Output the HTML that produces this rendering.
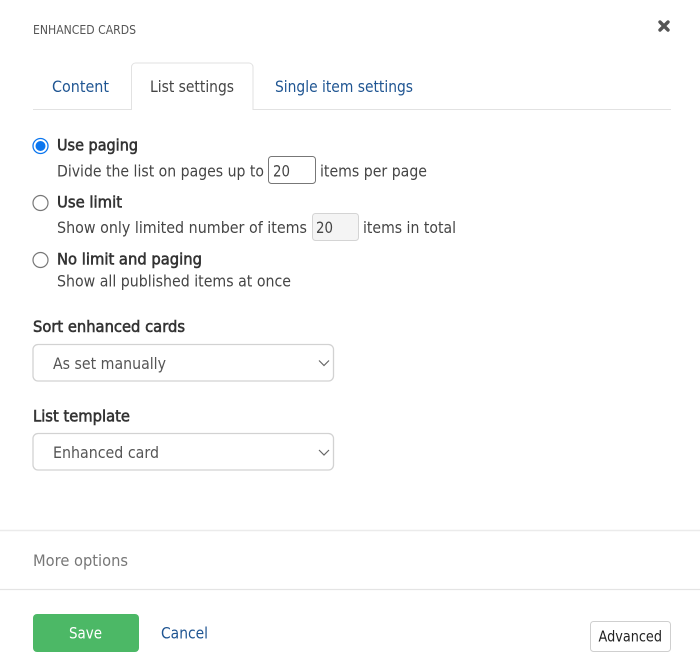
<!DOCTYPE html>
<html><head><meta charset="utf-8"><style>
html,body{margin:0;padding:0;background:#fff;width:700px;height:672px;overflow:hidden}
svg{display:block}
text{font-family:"DejaVu Sans","Liberation Sans",sans-serif;font-size:16px;fill:#454545}
.b{fill:#333;stroke:#333;stroke-width:.6px;font-size:16px}
.l{fill:#1f5592}
</style></head><body>
<svg width="700" height="672" viewBox="0 0 700 672" xmlns="http://www.w3.org/2000/svg">
<rect width="700" height="672" fill="#fff"/>
<text x="33" y="34" style="font-size:12.500px;fill:#555" textLength="103" lengthAdjust="spacingAndGlyphs">ENHANCED CARDS</text>
<path d="M660 22L668 30M668 22L660 30" stroke="#555" stroke-width="3.400" stroke-linecap="round"/>
<path d="M33 109.500H671" stroke="#e2e2e2" stroke-width="1"/>
<path d="M131.500 110V67a4 4 0 0 1 4-4H249a4 4 0 0 1 4 4V110" fill="#fff" stroke="#e2e2e2"/>
<rect x="132" y="107" width="120.500" height="4" fill="#fff"/>
<text class="l" x="52" y="92" textLength="57" lengthAdjust="spacingAndGlyphs">Content</text>
<text x="150" y="92" textLength="84" lengthAdjust="spacingAndGlyphs">List settings</text>
<text class="l" x="275" y="92" textLength="138" lengthAdjust="spacingAndGlyphs">Single item settings</text>

<circle cx="40.500" cy="146" r="7.500" fill="#fff" stroke="#0b76ef" stroke-width="1.300"/>
<circle cx="40.500" cy="146" r="5" fill="#0b76ef"/>
<text class="b" x="57" y="150.500" textLength="81" lengthAdjust="spacingAndGlyphs">Use paging</text>
<text x="57" y="176.500" textLength="207" lengthAdjust="spacingAndGlyphs">Divide the list on pages up to</text>
<rect x="268.500" y="156.500" width="47" height="27" rx="3" fill="#fff" stroke="#777"/>
<text x="273" y="176.500" textLength="17" lengthAdjust="spacingAndGlyphs">20</text>
<text x="320" y="176.500" textLength="107" lengthAdjust="spacingAndGlyphs">items per page</text>

<circle cx="40.500" cy="203" r="7.500" fill="#fff" stroke="#777" stroke-width="1.200"/>
<text class="b" x="57" y="207.500" textLength="65" lengthAdjust="spacingAndGlyphs">Use limit</text>
<text x="57" y="233" textLength="250" lengthAdjust="spacingAndGlyphs">Show only limited number of items</text>
<rect x="312.500" y="213.500" width="46" height="27" rx="3" fill="#f4f4f4" stroke="#d4d4d4"/>
<text x="316" y="233" textLength="17" lengthAdjust="spacingAndGlyphs">20</text>
<text x="363" y="233" textLength="93" lengthAdjust="spacingAndGlyphs">items in total</text>

<circle cx="40.500" cy="260" r="7.500" fill="#fff" stroke="#777" stroke-width="1.200"/>
<text class="b" x="57" y="264.500" textLength="145" lengthAdjust="spacingAndGlyphs">No limit and paging</text>
<text x="57" y="286.500" textLength="234" lengthAdjust="spacingAndGlyphs">Show all published items at once</text>

<text class="b" x="33" y="332" textLength="152" lengthAdjust="spacingAndGlyphs">Sort enhanced cards</text>
<rect x="33" y="344.500" width="300.500" height="36.500" rx="5" fill="#fff" stroke="#d2d2d2" stroke-width="1.300"/>
<text x="53" y="369" style="fill:#555" textLength="113" lengthAdjust="spacingAndGlyphs">As set manually</text>
<path d="M319 360.500L324 365.500L329 360.500" fill="none" stroke="#666" stroke-width="1.200"/>

<text class="b" x="33" y="421.500" textLength="97" lengthAdjust="spacingAndGlyphs">List template</text>
<rect x="33" y="433.500" width="300.500" height="36.500" rx="5" fill="#fff" stroke="#d2d2d2" stroke-width="1.300"/>
<text x="53" y="458" style="fill:#555" textLength="106" lengthAdjust="spacingAndGlyphs">Enhanced card</text>
<path d="M319 450L324 455L329 450" fill="none" stroke="#666" stroke-width="1.200"/>

<path d="M0 530.500H700" stroke="#ebebeb" stroke-width="1.500"/>
<text x="33" y="566" style="fill:#777" textLength="95" lengthAdjust="spacingAndGlyphs">More options</text>
<path d="M0 589.500H700" stroke="#e4e4e4" stroke-width="1.200"/>

<rect x="33" y="614" width="106" height="38" rx="4" fill="#4cb866"/>
<text x="69" y="638.500" style="fill:#fff" textLength="33" lengthAdjust="spacingAndGlyphs">Save</text>
<text class="l" x="161" y="638.500" textLength="47" lengthAdjust="spacingAndGlyphs">Cancel</text>
<rect x="590.500" y="621.500" width="80" height="30" rx="3" fill="#fff" stroke="#cfcfcf"/>
<text x="598.500" y="641.500" style="fill:#222;font-size:15px" textLength="63.500" lengthAdjust="spacingAndGlyphs">Advanced</text>
</svg>
</body></html>
